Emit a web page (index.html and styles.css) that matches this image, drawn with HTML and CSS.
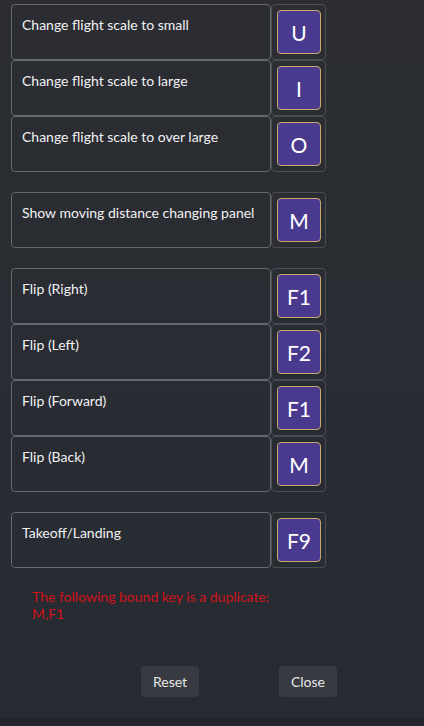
FILE: index.html
```html
<!DOCTYPE html>
<html>
<head>
<meta charset="utf-8">
<link rel="stylesheet" href="styles.css">
</head>
<body>
<div class="page">
  <div class="group">
    <div class="row"><div class="label">Change flight scale to small</div><div class="cell"><div class="key">U</div></div></div>
    <div class="row"><div class="label">Change flight scale to large</div><div class="cell"><div class="key">I</div></div></div>
    <div class="row"><div class="label">Change flight scale to over large</div><div class="cell"><div class="key">O</div></div></div>
  </div>
  <div class="group">
    <div class="row"><div class="label">Show moving distance changing panel</div><div class="cell"><div class="key">M</div></div></div>
  </div>
  <div class="group">
    <div class="row"><div class="label">Flip (Right)</div><div class="cell"><div class="key">F1</div></div></div>
    <div class="row"><div class="label">Flip (Left)</div><div class="cell"><div class="key">F2</div></div></div>
    <div class="row"><div class="label">Flip (Forward)</div><div class="cell"><div class="key">F1</div></div></div>
    <div class="row"><div class="label">Flip (Back)</div><div class="cell"><div class="key">M</div></div></div>
  </div>
  <div class="group">
    <div class="row"><div class="label">Takeoff/Landing</div><div class="cell"><div class="key">F9</div></div></div>
  </div>
  <div class="error">The following bound key is a duplicate:<br>M,F1</div>
  <div class="footer">
    <button class="btn">Reset</button>
    <button class="btn">Close</button>
  </div>
</div>
<div class="bottom-band"></div>
</body>
</html>
```
FILE: styles.css
```css
* { box-sizing: border-box; }
html, body {
  margin: 0;
  height: 100%;
}
body {
  background: linear-gradient(180deg, #2b2d32 0%, #292c32 50%, #262b33 100%);
  font-family: "Lato", "Noto Sans", sans-serif;
  color: #f2f2f2;
  overflow: hidden;
  position: relative;
}
.page {
  padding: 4px 0 0 11px;
}
.group {
  display: flex;
  flex-direction: column;
  margin-bottom: 20px;
}
.row {
  display: flex;
  height: 56px;
}
.label {
  width: 260px;
  height: 56px;
  border: 1px solid #66696e;
  border-radius: 4px;
  padding: 11px 10px;
  font-size: 14px;
  line-height: 18px;
}
.cell {
  width: 55px;
  height: 56px;
  border: 1px solid #4a4d53;
  border-radius: 4px;
  padding: 5px 4px 5px 5px;
}
.key {
  width: 44px;
  height: 44px;
  background: #4a3a8f;
  border: 1px solid #c9a96b;
  border-radius: 4px;
  display: flex;
  align-items: center;
  justify-content: center;
  font-size: 21px;
  color: #ffffff;
}
.error {
  margin: 6px 0 0 21px;
  color: #d0121a;
  font-size: 14px;
  line-height: 17px;
}
.footer {
  display: flex;
  gap: 80px;
  margin: 44px 0 0 130px;
}
.btn {
  width: 58px;
  height: 31px;
  border: none;
  border-radius: 4px;
  background: #373a41;
  color: #e8e8e8;
  font-family: "Lato", "Noto Sans", sans-serif;
  font-size: 14px;
  padding: 0;
}
.bottom-band {
  position: absolute;
  left: 0;
  right: 0;
  bottom: 0;
  height: 8px;
  background: #22262c;
}
```
